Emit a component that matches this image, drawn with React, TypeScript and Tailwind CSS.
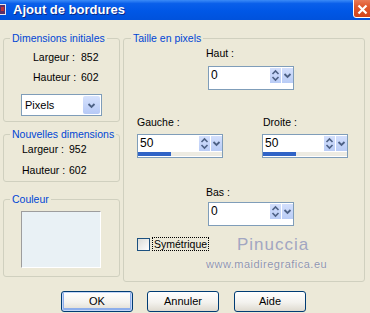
import React from "react";

function Arrows() {
  return (
    <svg width="11" height="15" viewBox="0 0 11 15">
      <path d="M2.5 6 L5.5 3 L8.5 6" fill="none" stroke="#4D6185" strokeWidth="1.6" />
      <path d="M2.5 9 L5.5 12 L8.5 9" fill="none" stroke="#4D6185" strokeWidth="1.6" />
    </svg>
  );
}

function Chevron() {
  return (
    <svg width="11" height="15" viewBox="0 0 11 15">
      <path d="M2.5 6 L5.5 9 L8.5 6" fill="none" stroke="#4D6185" strokeWidth="1.8" />
    </svg>
  );
}

function Spin({ value, bar }: { value: string; bar?: boolean }) {
  return (
    <div className="w-[86px] h-[24px] border border-[#7F9DB9] bg-white flex flex-col">
      <div className="h-[17px] flex">
        <span className="flex-1 pl-[2px] text-[12px] leading-[17px]">{value}</span>
        <div className="my-[1px] w-[11px] bg-[linear-gradient(to_bottom,#D3DFFC,#B9CCF6)] flex items-center justify-center">
          <Arrows />
        </div>
        <div className="my-[1px] ml-[1px] w-[11px] bg-[linear-gradient(to_bottom,#D3DFFC,#B9CCF6)] flex items-center justify-center">
          <Chevron />
        </div>
      </div>
      {bar ? (
        <div className="h-[5px] flex items-start">
          <div className="w-[33px] h-[4px] bg-[#2F63C6]" />
          <div className="flex-1 h-[4px] bg-[#EDEBE2]" />
        </div>
      ) : null}
    </div>
  );
}

function Btn({ label, def }: { label: string; def?: boolean }) {
  return (
    <div
      className={
        "w-[72px] h-[21px] rounded-[3px] border border-[#003C74] bg-[linear-gradient(to_bottom,#FFFFFF,#F3F2EE_55%,#DEDAD0)] flex items-center justify-center text-[11px] " +
        (def ? "shadow-[inset_0_0_0_1px_#C4D7F8,inset_0_-1px_0_2px_#8DAEEB]" : "")
      }
    >
      {label}
    </div>
  );
}

export default function App() {
  return (
    <div className="w-[370px] h-[313px] overflow-hidden bg-[#ECE9D8] text-black text-[10.5px] font-['Liberation_Sans',Arial,sans-serif]">
      {/* title bar */}
      <div className="h-[20px] flex items-center bg-[linear-gradient(to_bottom,#3B8BF7_0%,#0A5FEA_18%,#0057E6_55%,#0052DC_100%)]">
        <svg width="6" height="11" viewBox="0 0 6 11" className="mt-[-2px]">
          <rect x="0" y="0" width="6" height="11" fill="#E8E8F0" />
          <rect x="0" y="1" width="5" height="9" fill="#5A2F6A" />
          <rect x="1" y="3" width="3" height="4" fill="#C0303A" />
        </svg>
        <span className="ml-[7px] text-white font-bold text-[13px] leading-[20px] [text-shadow:1px_1px_0_#0A2A8A]">
          Ajout de bordures
        </span>
        <div className="ml-auto mr-[-4px] mt-[-6px] w-[21px] h-[22px] rounded-[3px] border border-white bg-[linear-gradient(to_bottom,#EE8A6A,#E05A30_45%,#D2441A)] flex items-center justify-center">
          <svg width="11" height="11" viewBox="0 0 11 11" className="mt-[4px] ml-[-3px]">
            <path d="M1.5 1.5 L9.5 9.5 M9.5 1.5 L1.5 9.5" stroke="white" strokeWidth="2.2" />
          </svg>
        </div>
      </div>

      {/* body */}
      <div className="flex items-start pt-[12px]">
        {/* left column */}
        <div className="ml-[3px] w-[117px] flex flex-col">
          <fieldset className="border border-[#D0D0BF] rounded-[3px] pb-[5px]">
            <legend className="ml-[6px] px-[2px] text-[#0046D5] leading-[13px]">Dimensions initiales</legend>
            <div className="flex mt-[6px] leading-[13px]">
              <span className="ml-[29px] w-[48px]">Largeur :</span>
              <span>852</span>
            </div>
            <div className="flex mt-[7px] leading-[13px]">
              <span className="ml-[29px] w-[48px]">Hauteur :</span>
              <span>602</span>
            </div>
            <div className="ml-[17px] mt-[10px] w-[81px] h-[22px] border border-[#7F9DB9] bg-white flex items-center">
              <span className="flex-1 pl-[3px] text-[11px]">Pixels</span>
              <div className="w-[17px] h-[18px] mr-[1px] rounded-[2px] bg-[linear-gradient(to_bottom,#D6E2FD,#B6C9F6)] flex items-center justify-center">
                <svg width="11" height="11" viewBox="0 0 11 11">
                  <path d="M2.5 4 L5.5 7 L8.5 4" fill="none" stroke="#4D6185" strokeWidth="1.8" />
                </svg>
              </div>
            </div>
          </fieldset>

          <fieldset className="mt-[6px] border border-[#D0D0BF] rounded-[3px] pb-[4px]">
            <legend className="ml-[6px] px-[2px] text-[#0046D5] leading-[13px]">Nouvelles dimensions</legend>
            <div className="flex mt-[2px] leading-[13px]">
              <span className="ml-[18px] w-[47px]">Largeur :</span>
              <span>952</span>
            </div>
            <div className="flex mt-[8px] leading-[13px]">
              <span className="ml-[18px] w-[47px]">Hauteur :</span>
              <span>602</span>
            </div>
          </fieldset>

          <fieldset className="mt-[11px] border border-[#D0D0BF] rounded-[3px] pb-[8px]">
            <legend className="ml-[6px] px-[2px] text-[#0046D5] leading-[13px]">Couleur</legend>
            <div className="ml-[17px] mt-[5px] w-[80px] h-[57px] bg-[#E9F1F5] border-t border-l border-t-[#9D9D9D] border-l-[#9D9D9D] border-b border-r border-b-white border-r-white" />
          </fieldset>
        </div>

        {/* right column */}
        <fieldset className="ml-[3px] w-[242px] border border-[#D0D0BF] rounded-[3px] pb-[30px]">
          <legend className="ml-[7px] px-[2px] text-[#0046D5] leading-[13px]">Taille en pixels</legend>
          <div className="ml-[82px] mt-[2px] leading-[13px]">Haut :</div>
          <div className="ml-[84px] mt-[6px]">
            <Spin value="0" />
          </div>
          <div className="flex mt-[26px] leading-[13px]">
            <span className="ml-[13px] w-[126px]">Gauche :</span>
            <span>Droite :</span>
          </div>
          <div className="flex mt-[5px]">
            <div className="ml-[13px]">
              <Spin value="50" bar />
            </div>
            <div className="ml-[39px]">
              <Spin value="50" bar />
            </div>
          </div>
          <div className="ml-[82px] mt-[28px] leading-[13px]">Bas :</div>
          <div className="ml-[84px] mt-[3px]">
            <Spin value="0" />
          </div>
          <div className="relative flex items-center mt-[11px] h-[14px]">
            <div className="ml-[13px] w-[13px] h-[13px] border border-[#1C5180] bg-[linear-gradient(135deg,#DCDCD7,#FFFFFF)]" />
            <span className="ml-[2px] px-[1px] h-[14px] leading-[12px] border border-dotted border-black">Symétrique</span>
            <span className="absolute left-[113px] top-[-2px] text-[17px] leading-[20px] tracking-[1px] text-[#A2A6C2]">Pinuccia</span>
            <span className="absolute left-[82px] top-[21px] text-[11px] leading-[13px] tracking-[0.5px] text-[#8F94AB] [text-shadow:0_0_1px_#FFFFFF]">
              www.maidiregrafica.eu
            </span>
          </div>
        </fieldset>
      </div>

      {/* buttons */}
      <div className="flex mt-[9px] pl-[61px] gap-[14px]">
        <Btn label="OK" def />
        <Btn label="Annuler" />
        <div className="ml-[1px]">
          <Btn label="Aide" />
        </div>
      </div>
    </div>
  );
}
